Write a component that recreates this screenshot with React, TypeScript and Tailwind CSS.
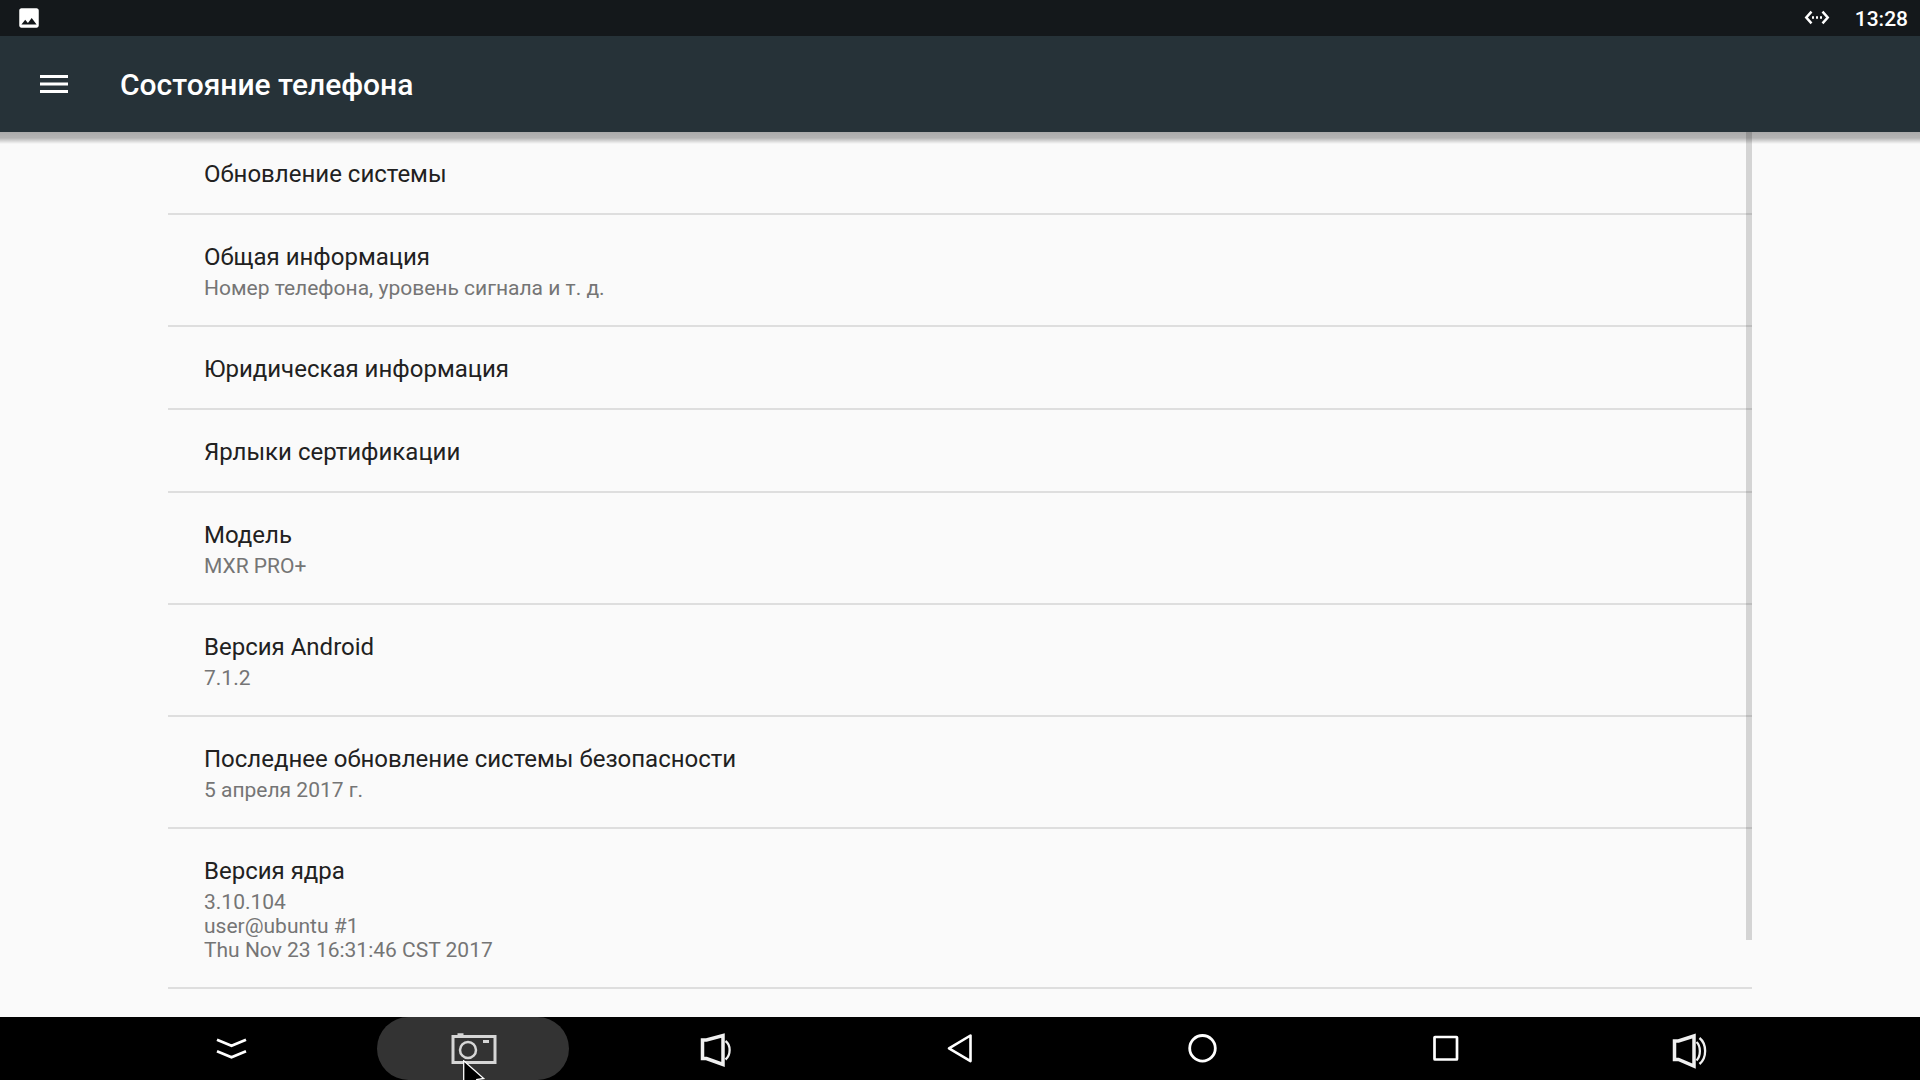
const items = [
  { title: 'Обновление системы' },
  { title: 'Общая информация', summary: ['Номер телефона, уровень сигнала и т. д.'] },
  { title: 'Юридическая информация' },
  { title: 'Ярлыки сертификации' },
  { title: 'Модель', summary: ['MXR PRO+'] },
  { title: 'Версия Android', summary: ['7.1.2'] },
  { title: 'Последнее обновление системы безопасности', summary: ['5 апреля 2017 г.'] },
  {
    title: 'Версия ядра',
    summary: ['3.10.104', 'user@ubuntu #1', 'Thu Nov 23 16:31:46 CST 2017'],
  },
]

// every nav icon is drawn on a 64x63 canvas, the full height of the bar
const navButtons = [
  {
    label: 'Скрыть панель',
    icon: (
      <g strokeWidth={2.7}>
        <path d="M19 22.800l14.500 6 14.500-6" />
        <path d="M19 34.300l14.500 6 14.500-6" />
      </g>
    ),
  },
  {
    label: 'Снимок экрана',
    active: true,
    icon: (
      <g stroke="#d6d6d6">
        <rect x="12" y="19.500" width="42" height="26" strokeWidth={3} />
        <path d="M16.500 17.500h6" strokeWidth={2.500} />
        <path d="M42 24.500h6" strokeWidth={3} />
        <circle cx="27" cy="33" r="8" strokeWidth={2.500} />
      </g>
    ),
  },
  {
    label: 'Тише',
    icon: (
      <g stroke="#f0f0f0">
        <path d="M17.500 23h4l16.500-4.500v29l-16.500-6h-4z" strokeWidth={3.500} />
        <path d="M40.500 24c5.500 4 5.500 14 0 18.500" strokeWidth={2.300} />
      </g>
    ),
  },
  {
    label: 'Назад',
    icon: <path d="M21 31.300l21.500-12.800v25.600z" strokeWidth={2.600} strokeLinejoin="round" />,
  },
  {
    label: 'Домой',
    icon: <circle cx="31.500" cy="31.300" r="12.800" strokeWidth={2.800} />,
  },
  {
    label: 'Недавние',
    icon: <rect x="19.500" y="20" width="22.500" height="22.500" rx="0.500" strokeWidth={2.700} />,
  },
  {
    label: 'Громче',
    icon: (
      <g stroke="#f0f0f0">
        <path d="M16.500 24h4l15.500-5v30l-15.500-6.500h-4z" strokeWidth={3.500} />
        <path d="M38.500 25c4.500 4 4.500 14 0 18.500M41.500 21c7.500 6 7.500 20 0 26" strokeWidth={2.300} />
      </g>
    ),
  },
]

function StatusBar() {
  return (
    <div className="flex h-9 shrink-0 items-center justify-between bg-[#14181b] pr-3 pl-4 text-white">
      <svg className="size-[26px]" viewBox="0 0 24 24" fill="currentColor">
        <path d="M21 19V5c0-1.100-.9-2-2-2H5c-1.100 0-2 .9-2 2v14c0 1.100.9 2 2 2h14c1.100 0 2-.9 2-2zM8.500 13.500l2.500 3.010L14.500 12l4.500 6H5l3.500-4.500z" />
      </svg>
      <div className="flex items-center gap-6">
        <svg className="h-6 w-7" viewBox="0 0 28 24" fill="none" stroke="currentColor" strokeWidth={2.500}>
          <path d="M8.500 5.700L3.300 11.500l5.200 5.800M19.500 5.700l5.200 5.800-5.200 5.800" />
          <path d="M9 11.500h2M13 11.500h2M17 11.500h2" />
        </svg>
        <time className="pt-0.5 text-[21px] leading-6 font-medium">13:28</time>
      </div>
    </div>
  )
}

function Toolbar() {
  return (
    <header className="flex h-24 shrink-0 items-center bg-[#263238] pl-9 text-white">
      <button type="button" aria-label="Меню" className="flex size-9 items-center justify-center">
        <svg className="size-9" viewBox="0 0 36 36" fill="none" stroke="currentColor" strokeWidth={3}>
          <path d="M4 10.500h28M4 18h28M4 25.500h28" />
        </svg>
      </button>
      <h1 className="ml-12 pt-0.5 text-[30px] leading-9 font-medium">Состояние телефона</h1>
    </header>
  )
}

function NavBar() {
  return (
    <nav className="relative grid h-[63px] shrink-0 grid-cols-7 justify-items-center bg-black px-27 text-white">
      {navButtons.map((b) => (
        <button
          key={b.label}
          type="button"
          aria-label={b.label}
          className={`flex h-full w-48 justify-center rounded-full ${b.active ? 'bg-[#333333]' : ''}`}
        >
          <svg className="h-full w-16" viewBox="0 0 64 63" fill="none" stroke="currentColor">
            {b.icon}
          </svg>
        </button>
      ))}
      {/* mouse pointer, cut off by the bottom edge */}
      <svg className="absolute bottom-0 left-[462px] h-5 w-6" viewBox="0 0 24 20">
        <path d="M1.700 0.800V30l7-6 5 11 1-15.500 7-1z" fill="#000" stroke="#fff" strokeWidth={1.300} />
      </svg>
    </nav>
  )
}

export default function App() {
  return (
    <div className="flex h-screen flex-col overflow-hidden bg-[#fafafa] font-[Roboto,sans-serif]">
      <StatusBar />
      <Toolbar />
      <main className="relative min-h-0 flex-1 overflow-hidden px-42">
        <div className="relative h-full">
          <ul>
            {items.map((item) => (
              <li key={item.title} className="border-b-2 border-[#dedede]">
                <button type="button" className="block w-full px-9 pt-7 pb-[25px] text-left">
                  <span className="block text-2xl leading-7 text-[#212121]">{item.title}</span>
                  {item.summary && (
                    <span className="mt-[5px] block text-[21px] leading-6 text-[#757575]">
                      {item.summary.map((line) => (
                        <span key={line} className="block">{line}</span>
                      ))}
                    </span>
                  )}
                </button>
              </li>
            ))}
          </ul>
          {/* scrollbar thumb */}
          <div className="absolute top-0 right-0 bottom-[77px] w-1.5 bg-black/15" />
        </div>
        <div className="absolute inset-x-0 top-0 h-3 bg-linear-to-b from-black/32 via-black/28 via-50% to-transparent" />
      </main>
      <NavBar />
    </div>
  )
}
